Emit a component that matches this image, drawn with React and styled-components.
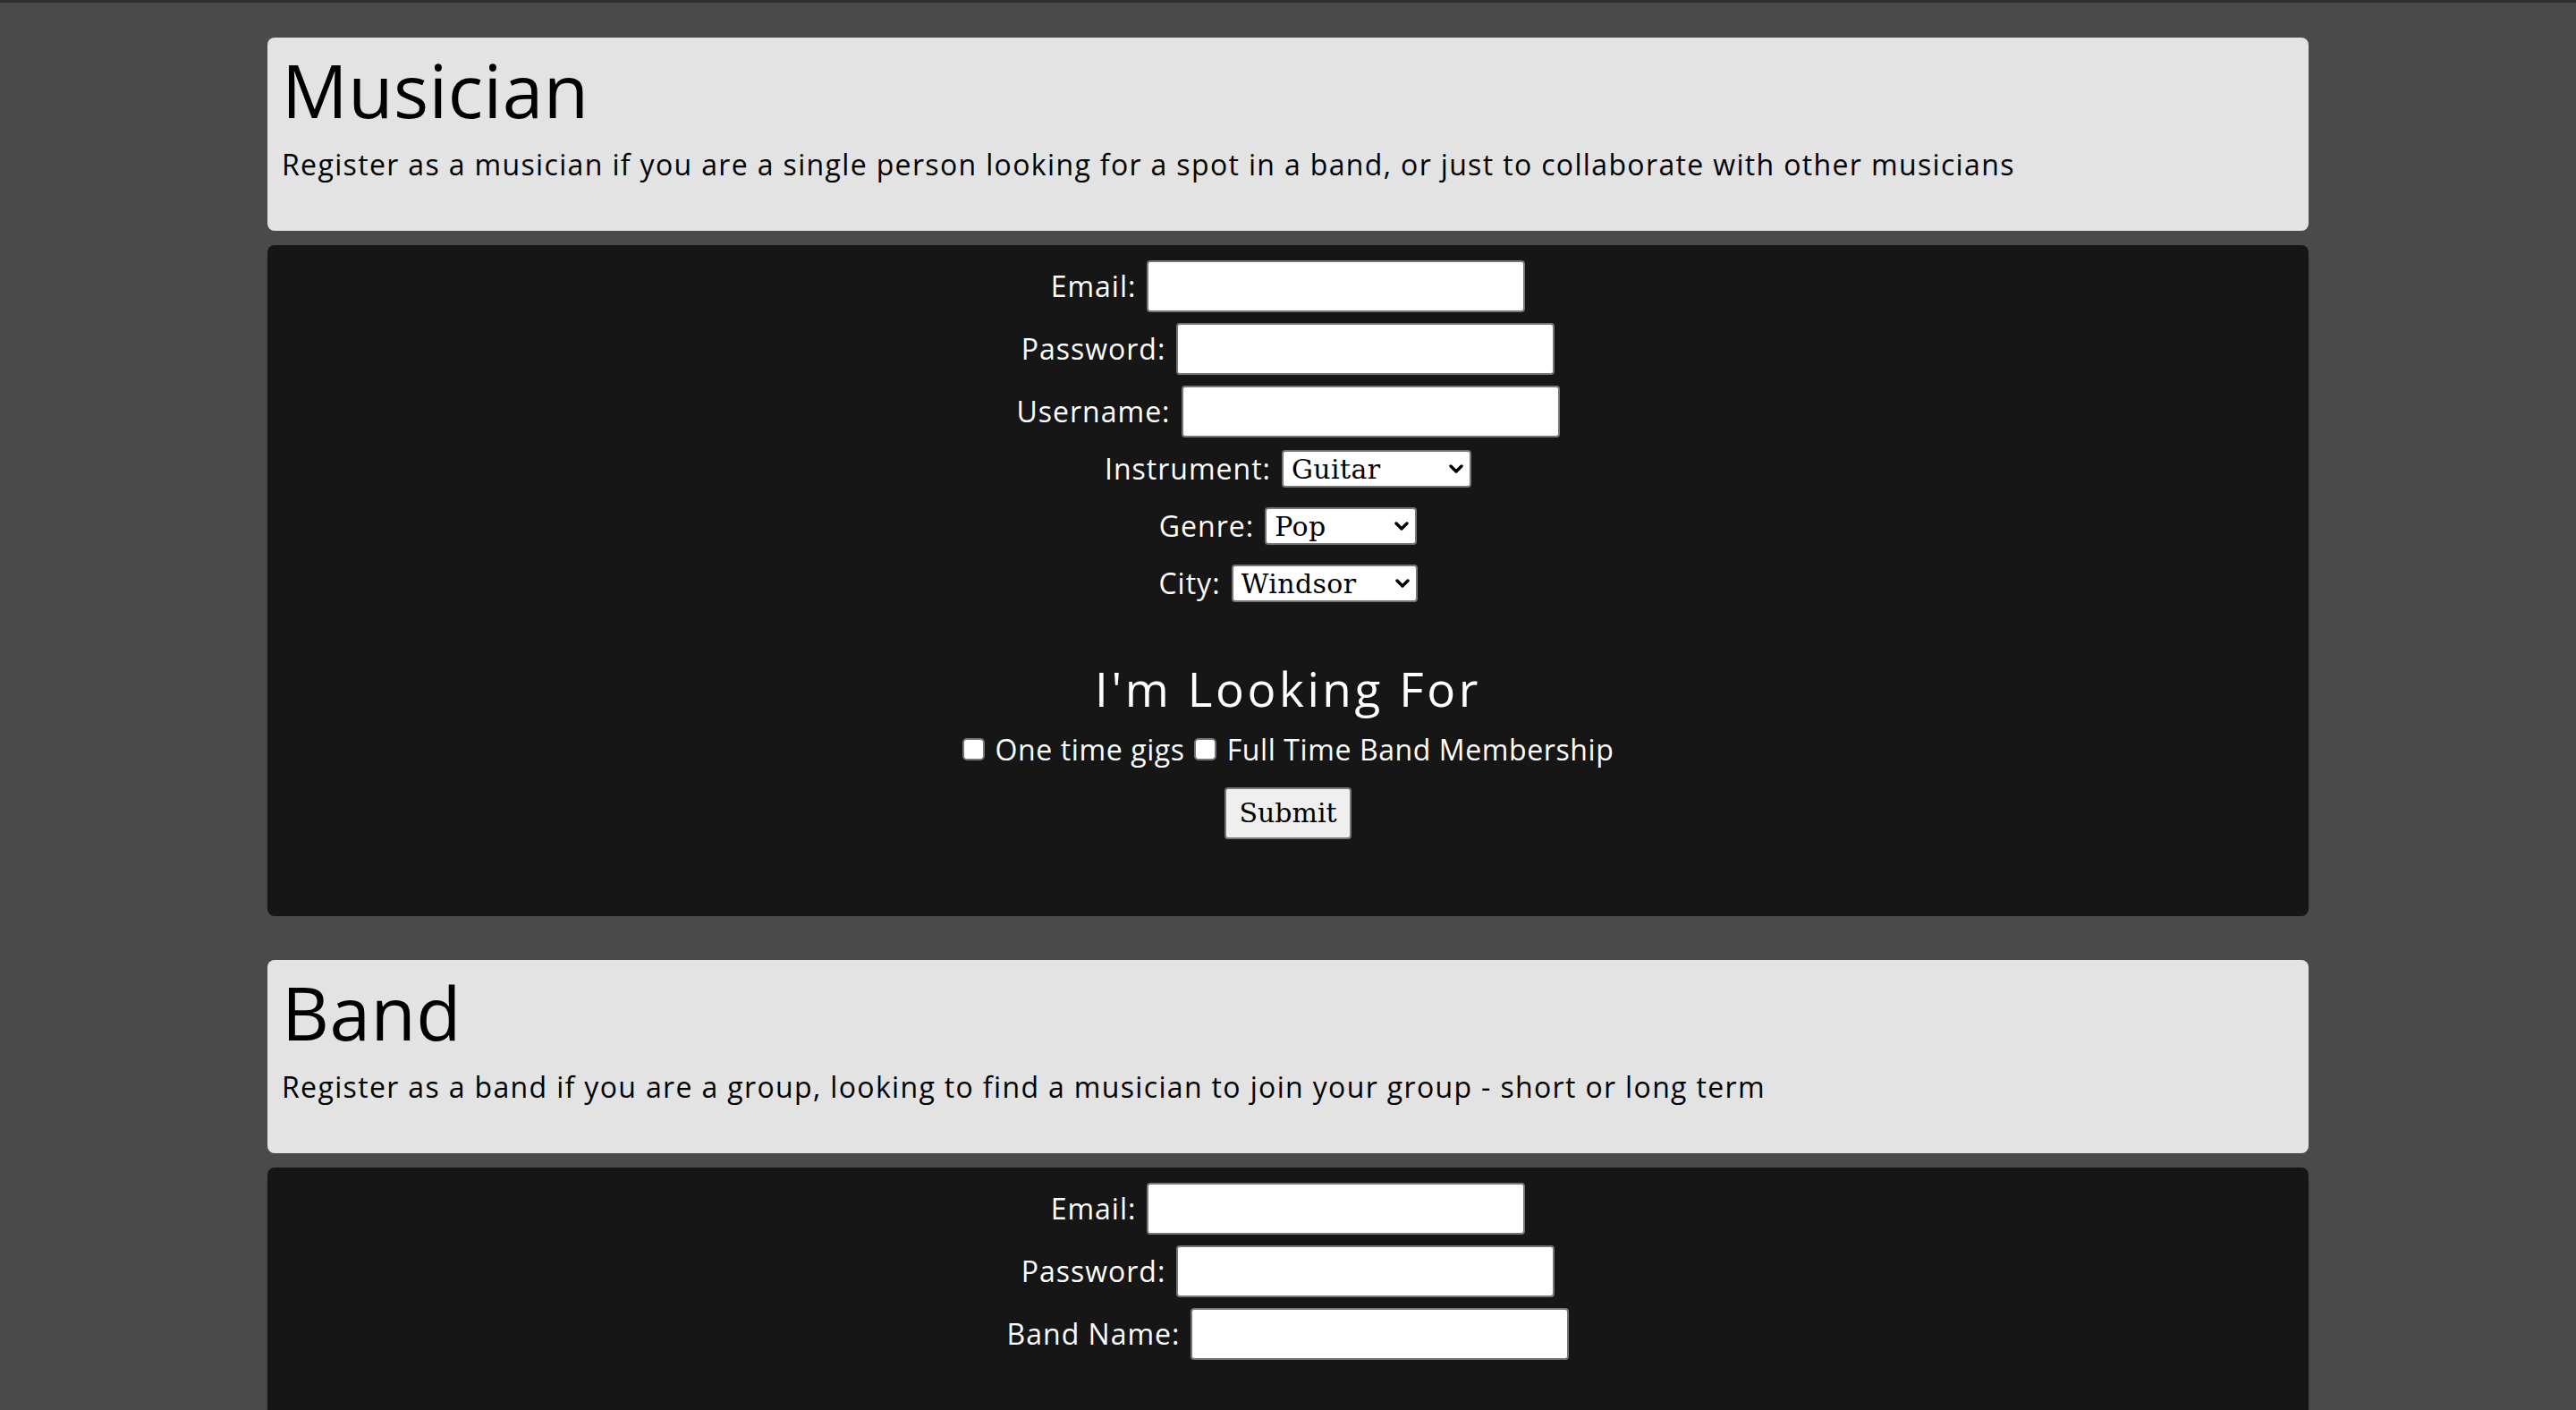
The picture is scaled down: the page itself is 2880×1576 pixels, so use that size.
import React from "react";
import styled, { createGlobalStyle } from "styled-components";

const GlobalStyle = createGlobalStyle`
  html, body {
    margin: 0;
    padding: 0;
  }
  body {
    background: #4a4a4a;
    border-top: 3px solid #2d2e32;
    font-family: "Open Sans", Roboto, sans-serif;
    font-size: 32px;
    color: #000;
  }
`;

const Page = styled.main`
  width: 2282px;
  margin: 0 auto;
  padding: 39px 0 48px;
  display: flex;
  flex-direction: column;
  gap: 49px;
`;

const Section = styled.section`
  display: flex;
  flex-direction: column;
  gap: 16px;
`;

const IntroCard = styled.header`
  background: #e3e3e3;
  border-radius: 8px;
  padding: 17px 16px 55px;
`;

const Title = styled.h1`
  margin: 0 0 24px;
  font-size: 82px;
  font-weight: 400;
  line-height: 1;
  letter-spacing: 0.5px;
`;

const Blurb = styled.p`
  margin: 0;
  line-height: 1.2;
  letter-spacing: 1.35px;
`;

const FormPanel = styled.form`
  background: #161616;
  border-radius: 8px;
  padding: 17px 16px 86px;
  display: flex;
  flex-direction: column;
  align-items: center;
  color: #fff;
`;

const FieldRow = styled.div`
  display: flex;
  align-items: center;
  justify-content: center;
  gap: 12px;
  margin-top: ${(p) => p.$top || 0}px;
`;

const Label = styled.label`
  line-height: 1.2;
  letter-spacing: 1px;
`;

const TextInput = styled.input`
  box-sizing: border-box;
  width: 423px;
  height: 58px;
  border: 2px solid #767676;
  border-radius: 4px;
  background: #fff;
  font-size: 28px;
  padding: 0 8px;
`;

const SelectWrap = styled.span`
  position: relative;
  display: inline-flex;
`;

const Select = styled.select`
  appearance: none;
  box-sizing: border-box;
  width: ${(p) => p.$w}px;
  height: 42px;
  border: 2px solid #767676;
  border-radius: 4px;
  background: #fff;
  color: #000;
  font-family: "DejaVu Serif", serif;
  font-size: 30px;
  letter-spacing: 0.4px;
  padding: 0 32px 0 9px;
`;

const Chevron = styled.svg`
  position: absolute;
  right: 9px;
  top: 50%;
  width: 16px;
  height: 10px;
  margin-top: -5px;
  pointer-events: none;
`;

const SubHeading = styled.h2`
  margin: 70px 0 0;
  font-size: 53px;
  font-weight: 400;
  line-height: 1;
  letter-spacing: 3.6px;
`;

const CheckRow = styled.div`
  display: flex;
  align-items: center;
  justify-content: center;
  margin-top: 23px;
  line-height: 1.2;
  letter-spacing: 0.6px;
`;

const Check = styled.input`
  appearance: none;
  box-sizing: border-box;
  width: 25px;
  height: 25px;
  margin: 0 12px 2px 0;
  border: 2px solid #767676;
  border-radius: 5px;
  background: #fff;
`;

const CheckLabel = styled.label`
  margin-right: 10px;
  &:last-child {
    margin-right: 0;
  }
`;

const SubmitButton = styled.button`
  box-sizing: border-box;
  margin-top: 22px;
  width: 142px;
  height: 58px;
  border: 2px solid #767676;
  border-radius: 4px;
  background: #efefef;
  color: #000;
  font-family: "DejaVu Serif", serif;
  font-size: 30px;
  padding: 0;
`;

function Dropdown({ id, width, options }) {
  return (
    <SelectWrap>
      <Select id={id} $w={width} defaultValue={options[0]}>
        {options.map((o) => (
          <option key={o}>{o}</option>
        ))}
      </Select>
      <Chevron viewBox="0 0 16 10">
        <path d="M2 2 L8 8 L14 2" fill="none" stroke="#000" strokeWidth="3.4" strokeLinecap="round" strokeLinejoin="round" />
      </Chevron>
    </SelectWrap>
  );
}

const instruments = ["Guitar", "Bass", "Drums", "Vocals", "Keyboard"];
const genres = ["Pop", "Rock", "Jazz", "Metal", "Blues"];
const cities = ["Windsor", "Toronto", "London", "Ottawa"];

export default function App() {
  return (
    <>
      <GlobalStyle />
      <Page>
        <Section>
          <IntroCard>
            <Title>Musician</Title>
            <Blurb>
              Register as a musician if you are a single person looking for a spot in a band, or just to collaborate
              with other musicians
            </Blurb>
          </IntroCard>
          <FormPanel>
            <FieldRow>
              <Label htmlFor="m-email">Email:</Label>
              <TextInput id="m-email" type="email" />
            </FieldRow>
            <FieldRow $top={12}>
              <Label htmlFor="m-pass">Password:</Label>
              <TextInput id="m-pass" type="password" />
            </FieldRow>
            <FieldRow $top={12}>
              <Label htmlFor="m-user">Username:</Label>
              <TextInput id="m-user" type="text" />
            </FieldRow>
            <FieldRow $top={14}>
              <Label htmlFor="m-inst">Instrument:</Label>
              <Dropdown id="m-inst" width={212} options={instruments} />
            </FieldRow>
            <FieldRow $top={22}>
              <Label htmlFor="m-genre">Genre:</Label>
              <Dropdown id="m-genre" width={170} options={genres} />
            </FieldRow>
            <FieldRow $top={22}>
              <Label htmlFor="m-city">City:</Label>
              <Dropdown id="m-city" width={208} options={cities} />
            </FieldRow>
            <SubHeading>I'm Looking For</SubHeading>
            <CheckRow>
              <Check type="checkbox" id="m-gigs" />
              <CheckLabel htmlFor="m-gigs">One time gigs</CheckLabel>
              <Check type="checkbox" id="m-full" />
              <CheckLabel htmlFor="m-full">Full Time Band Membership</CheckLabel>
            </CheckRow>
            <SubmitButton type="button">Submit</SubmitButton>
          </FormPanel>
        </Section>

        <Section>
          <IntroCard>
            <Title>Band</Title>
            <Blurb>
              Register as a band if you are a group, looking to find a musician to join your group - short or long term
            </Blurb>
          </IntroCard>
          <FormPanel>
            <FieldRow>
              <Label htmlFor="b-email">Email:</Label>
              <TextInput id="b-email" type="email" />
            </FieldRow>
            <FieldRow $top={12}>
              <Label htmlFor="b-pass">Password:</Label>
              <TextInput id="b-pass" type="password" />
            </FieldRow>
            <FieldRow $top={12}>
              <Label htmlFor="b-name">Band Name:</Label>
              <TextInput id="b-name" type="text" />
            </FieldRow>
          </FormPanel>
        </Section>
      </Page>
    </>
  );
}
